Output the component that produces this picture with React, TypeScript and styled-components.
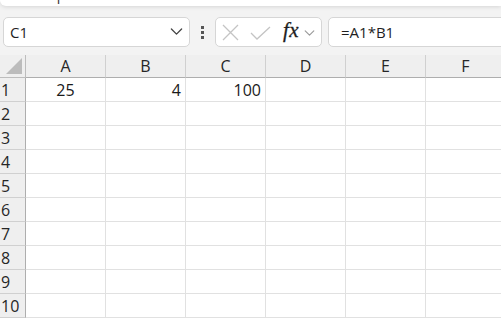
import styled, {createGlobalStyle} from 'styled-components';

const GlobalStyle = createGlobalStyle`
  html, body {
    margin:0;
    padding:0;
    background:#f3f3f3;
    overflow:hidden;
  }
  body {
    font-family: "Open Sans", "Noto Sans", sans-serif;
    color:#1f1f1f;
  }
`

const columns = ['A', 'B', 'C', 'D', 'E', 'F'];
const rowCount = 10;

type Align = 'left' | 'center' | 'right';
const values: Record<string, {text:string; align:Align}> = {
  A1: {text:'25', align:'center'},
  B1: {text:'4', align:'right'},
  C1: {text:'100', align:'right'},
};

function Chevron({size, color}:{size:number; color:string}){
  return (
    <svg width={size} height={size * 0.55} viewBox="0 0 12 7" fill="none">
      <path d="M1 1l5 5 5-5" stroke={color} strokeWidth="1.3" strokeLinecap="round" strokeLinejoin="round"/>
    </svg>
  );
}

export default function App(){
  return (
    <>
      <GlobalStyle />
      <Page>
        <TopCard><TopTitle>Example</TopTitle></TopCard>
        <FormulaBar>
          <NameBox>
            <span>C1</span>
            <Chevron size={13} color="#444" />
          </NameBox>
          <Dots><i /><i /><i /></Dots>
          <ActionBox>
            <svg width="17" height="17" viewBox="0 0 17 17">
              <path d="M1 1l15 15M16 1L1 16" stroke="#c4c4c4" strokeWidth="1.3"/>
            </svg>
            <svg width="21" height="14" viewBox="0 0 21 14">
              <path d="M1 7l6 6L20 1" stroke="#c4c4c4" strokeWidth="1.3" fill="none"/>
            </svg>
            <Fx>fx</Fx>
            <Chevron size={11} color="#9a9a9a" />
          </ActionBox>
          <FormulaInput>=A1*B1</FormulaInput>
        </FormulaBar>
        <Sheet>
          <Corner><CornerTriangle /></Corner>
          {columns.map(c => <ColHead key={c}>{c}</ColHead>)}
          {Array.from({length: rowCount}, (_, i) => {
            const row = i + 1;
            return [
              <RowHead key={'r' + row}>{row}</RowHead>,
              ...columns.map(c => {
                const v = values[c + row];
                return <Cell key={c + row} align={v ? v.align : 'left'}>{v ? v.text : ''}</Cell>;
              }),
            ];
          })}
        </Sheet>
      </Page>
    </>
  );
}

const Page = styled.div`
  width:501px;
  height:318px;
  overflow:hidden;
  background:#f3f3f3;
`

const TopCard = styled.div`
  height:6px;
  background:#ffffff;
  border-bottom-left-radius:6px;
  box-shadow:0 1px 4px rgba(0,0,0,0.12);
  overflow:hidden;
  position:relative;
`

const TopTitle = styled.div`
  margin:-14px 0 0 21px;
  font-size:14px;
  line-height:18px;
  color:#333;
`

const FormulaBar = styled.div`
  display:flex;
  align-items:center;
  margin-top:11px;
  padding-left:3px;
  height:30px;
  width:600px;
`

const boxBase = `
  box-sizing:border-box;
  height:30px;
  background:#ffffff;
  border:1px solid #d6d6d6;
  border-radius:5px;
  display:flex;
  align-items:center;
  flex-shrink:0;
`

const NameBox = styled.div`
  ${boxBase}
  width:187px;
  padding:0 6px 0 6px;
  justify-content:space-between;
  font-size:15px;
  color:#1f1f1f;
`

const Dots = styled.div`
  width:25px;
  flex-shrink:0;
  display:flex;
  flex-direction:column;
  align-items:center;
  gap:2px;
  & > i{
    display:block;
    width:3px;
    height:3px;
    background:#555;
  }
`

const ActionBox = styled.div`
  ${boxBase}
  width:107px;
  padding:0 3px 0 6px;
  & > svg:nth-child(1){ margin-right:11px; }
  & > svg:nth-child(2){ margin-right:12px; margin-top:1px; }
  & > svg:last-child{ margin-left:5px; margin-top:2px; }
`

const Fx = styled.span`
  font-family:"Liberation Serif", "DejaVu Serif", serif;
  font-style:italic;
  font-size:21px;
  color:#1e1e1e;
  letter-spacing:0.5px;
  margin-top:-3px;
  -webkit-text-stroke:0.3px #1e1e1e;
`

const FormulaInput = styled.div`
  ${boxBase}
  margin-left:6px;
  width:260px;
  padding-left:12px;
  font-size:15px;
  color:#1f1f1f;
`

const Sheet = styled.div`
  margin-top:8px;
  display:grid;
  grid-template-columns:26px repeat(6, 80px);
  grid-template-rows:23px;
  grid-auto-rows:24px;
  font-size:16px;
`

const headBase = `
  box-sizing:border-box;
  background:#efefef;
  color:#262626;
  display:flex;
  align-items:center;
`

const Corner = styled.div`
  ${headBase}
  position:relative;
  border-right:1px solid #bdbdbd;
  border-bottom:1px solid #bdbdbd;
`

const CornerTriangle = styled.div`
  position:absolute;
  right:3px;
  bottom:3px;
  width:0;
  height:0;
  border-left:16px solid transparent;
  border-bottom:16px solid #bcbcbc;
`

const ColHead = styled.div`
  ${headBase}
  justify-content:center;
  border-right:1px solid #d0d0d0;
  border-bottom:1px solid #aeaeae;
`

const RowHead = styled.div`
  ${headBase}
  padding-left:1px;
  border-right:1px solid #aeaeae;
  border-bottom:1px solid #d0d0d0;
`

const Cell = styled.div<{align:Align}>`
  box-sizing:border-box;
  background:#ffffff;
  border-right:1px solid #e1e1e1;
  border-bottom:1px solid #e1e1e1;
  display:flex;
  align-items:center;
  padding:0 4px;
  color:#1a1a1a;
  justify-content:${props => props.align === 'center' ? 'center' : props.align === 'right' ? 'flex-end' : 'flex-start'};
`
